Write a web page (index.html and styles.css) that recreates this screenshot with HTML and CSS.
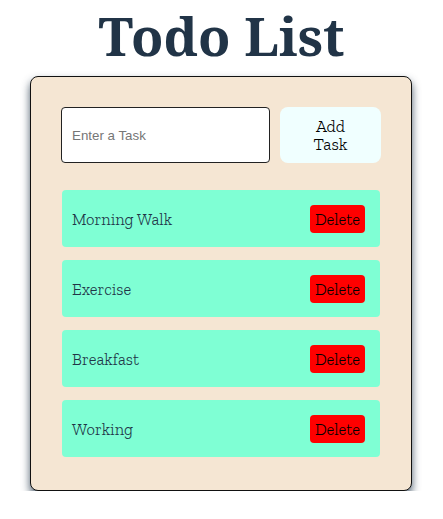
FILE: index.html
```html
<!DOCTYPE html>
<html><head><link rel="stylesheet" href="styles.css"></head>
<body>
<h1 class="title">Todo List</h1>
<div class="card">
  <div class="form">
    <input class="task-input" type="text" placeholder="Enter a Task">
    <button class="add-btn">Add Task</button>
  </div>
  <ul class="list">
    <li class="item"><span class="item-text">Morning Walk</span><button class="del">Delete</button></li>
    <li class="item"><span class="item-text">Exercise</span><button class="del">Delete</button></li>
    <li class="item"><span class="item-text">Breakfast</span><button class="del">Delete</button></li>
    <li class="item"><span class="item-text">Working</span><button class="del">Delete</button></li>
  </ul>
</div>
</body></html>
```
FILE: styles.css
```css
body{margin:0;padding:0;background:#fff;font-family:"Zilla Slab",serif;}
.title{font-family:"Noto Serif",Georgia,serif;font-weight:700;font-size:53px;color:#213447;text-align:center;margin:8px 0 0;line-height:56px;}
.card{margin:12px 0 0 30px;width:382px;box-sizing:border-box;background:#f5e6d3;border:1px solid #111;border-radius:8px;box-shadow:0 5px 9px rgba(33,52,71,0.8);padding:30px 30px 33px;}
.form{display:flex;gap:10px;}
.task-input{flex:0 0 209px;height:56px;box-sizing:border-box;border:1px solid #222;border-radius:4px;padding:0 10px;font-family:"Liberation Sans",Arial,sans-serif;font-size:13.33px;background:#fff;outline:none;}
.task-input::placeholder{color:#767676;}
.add-btn{flex:0 0 101px;height:56px;border:none;border-radius:8px;background:#f0ffff;font-family:"Zilla Slab",serif;font-weight:300;font-size:17px;line-height:18px;color:#000;padding:0 22px;}
.list{list-style:none;margin:27px 0 0;padding:0;display:flex;flex-direction:column;gap:13px;}
.item{height:57px;background:#7fffd4;border-radius:4px;display:flex;align-items:center;justify-content:space-between;padding:0 15px 0 10px;box-sizing:border-box;margin:0 1px;}
.item-text{font-size:16.5px;font-weight:300;color:#213447;}
.del{background:#f00;border:none;border-radius:4px;height:28px;width:55px;padding:0;font-family:"Zilla Slab",serif;font-weight:300;font-size:16.5px;color:#000;}
```
